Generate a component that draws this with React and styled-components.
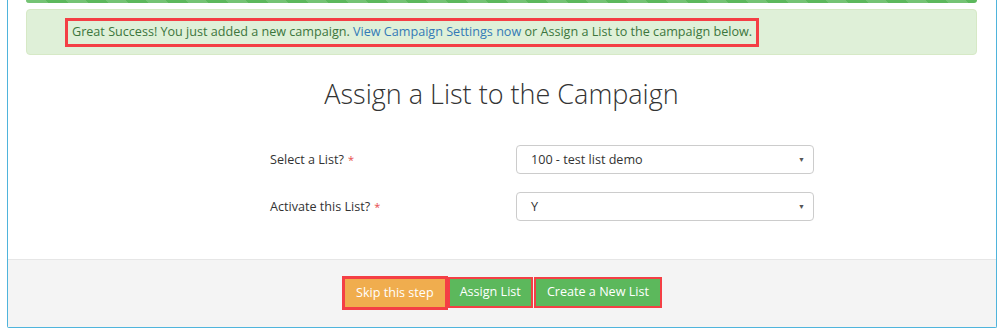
import React from "react";
import styled, { createGlobalStyle } from "styled-components";

const Global = createGlobalStyle`
  html, body { margin: 0; padding: 0; background: #fff; }
  body { font-family: "Open Sans", "Liberation Sans", sans-serif; font-size: 12.6px; color: #333; }
  * { box-sizing: border-box; }
`;

const Panel = styled.div`
  margin-left: 7px;
  width: 990px;
  height: 328px;
  border: 1px solid #4fb4dc;
  border-top: none;
  border-radius: 0 0 2px 2px;
  display: flex;
  flex-direction: column;
`;

const Body = styled.div`
  padding: 0 19px 0 18px;
  height: 259px;
`;

const Progress = styled.div`
  height: 3px;
  border-radius: 0 0 3px 3px;
  background-color: #5cb85c;
  background-image: linear-gradient(
    45deg,
    rgba(255, 255, 255, 0.15) 25%,
    transparent 25%,
    transparent 50%,
    rgba(255, 255, 255, 0.15) 50%,
    rgba(255, 255, 255, 0.15) 75%,
    transparent 75%,
    transparent
  );
  background-size: 40px 40px;
`;

const Alert = styled.div`
  margin-top: 6px;
  height: 46px;
  background: #dff0d8;
  border: 1px solid #d6e9c6;
  border-radius: 4px;
  color: #3c763d;
  padding: 8px 0 0 38px;
`;

const Marked = styled.span`
  display: inline-block;
  border: 3px solid #f43f45;
  padding: 2px 4px 3px 4px;
  line-height: 18px;
`;

const Link = styled.a`
  color: #337ab7;
  text-decoration: none;
`;

const Title = styled.h1`
  margin: 19px 0 0;
  text-align: center;
  font-weight: 300;
  font-size: 27px;
  line-height: 40px;
  color: #333;
`;

const Form = styled.div`
  margin: 31px 0 0 244px;
  width: 544px;
  display: flex;
  flex-direction: column;
  gap: 18px;
`;

const Row = styled.div`
  display: grid;
  grid-template-columns: 246px 298px;
  align-items: center;
`;

const Label = styled.label`
  color: #333;
`;

const Req = styled.span`
  color: #e74c4c;
  font-size: 11px;
  margin-left: 4px;
`;

const Select = styled.div`
  height: 29px;
  border: 1px solid #ccc;
  border-radius: 4px;
  display: flex;
  align-items: center;
  justify-content: space-between;
  padding: 0 8px 0 14px;
  color: #333;
`;

const Caret = styled.span`
  font-size: 7px;
  color: #555;
`;

const Footer = styled.div`
  flex: 1;
  background: #f4f4f4;
  border-top: 1px solid #e6e6e6;
  display: flex;
  justify-content: center;
  align-items: flex-start;
  padding-top: 16px;
`;

const Outline = styled.span`
  display: inline-flex;
  border: ${(p) => p.$w}px solid #f43f45;
  margin-left: ${(p) => p.$ml || 0}px;
  margin-top: ${(p) => p.$mt || 0}px;
`;

const Button = styled.button`
  border: none;
  border-radius: 0;
  background: ${(p) => (p.$warn ? "#f0ad4e" : "#5cb85c")};
  color: #fff;
  font-family: "Open Sans", "Liberation Sans", sans-serif;
  font-size: 12.6px;
  height: ${(p) => p.$h}px;
  padding: 0 ${(p) => p.$px}px;
  line-height: 1;
`;

export default function App() {
  return (
    <>
      <Global />
      <Panel>
        <Body>
          <Progress />
          <Alert>
            <Marked>
              Great Success! You just added a new campaign.{" "}
              <Link href="#">View Campaign Settings now</Link> or Assign a List to the campaign below.
            </Marked>
          </Alert>
          <Title>Assign a List to the Campaign</Title>
          <Form>
            <Row>
              <Label>
                Select a List?<Req>*</Req>
              </Label>
              <Select>
                <span>100 - test list demo</span>
                <Caret>▼</Caret>
              </Select>
            </Row>
            <Row>
              <Label>
                Activate this List?<Req>*</Req>
              </Label>
              <Select>
                <span>Y</span>
                <Caret>▼</Caret>
              </Select>
            </Row>
          </Form>
        </Body>
        <Footer>
          <Outline $w={3}>
            <Button $warn $h={28} $px={11}>Skip this step</Button>
          </Outline>
          <Outline $w={2} $mt={1}>
            <Button $h={27} $px={10}>Assign List</Button>
          </Outline>
          <Outline $w={2} $ml={1} $mt={1}>
            <Button $h={27} $px={11}>Create a New List</Button>
          </Outline>
        </Footer>
      </Panel>
    </>
  );
}
